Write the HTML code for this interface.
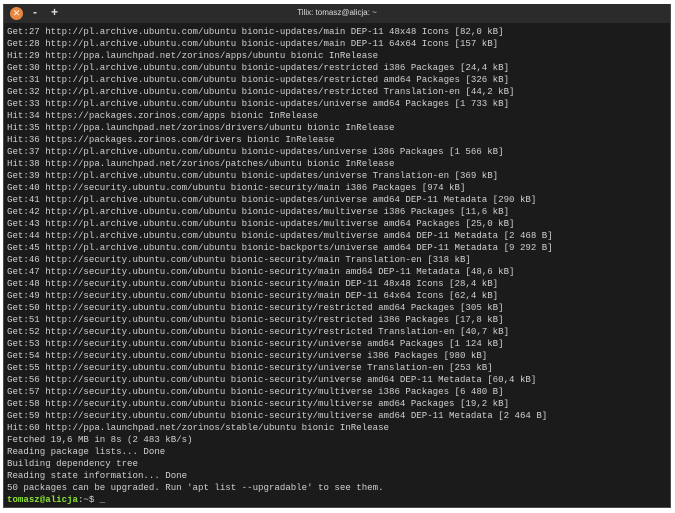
<!DOCTYPE html><html><head><style>
body{margin:0;width:675px;height:513px;background:#fff;overflow:hidden;position:relative;font-family:"Liberation Sans",sans-serif}
.win{position:absolute;left:3px;top:4px;width:666px;height:503px;background:#1b1b1b;border:1px solid #4a4a4a;border-top:none}
.tb{height:19px;background:#2b2b2b;position:relative}
.x{position:absolute;left:6px;top:3px;width:13px;height:13px;border-radius:50%;background:#e9863f;color:#fff;font-size:9px;line-height:13px;text-align:center}
.b{position:absolute;top:1px;color:#ddd;font-size:12px;font-weight:bold}
.t{position:absolute;left:0;right:0;top:4px;text-align:center;color:#ddd;font-size:8px}
pre{margin:0;position:absolute;left:3px;top:22px;color:#cfcfcf;font-family:"Liberation Mono",monospace;font-size:9.1px;line-height:12px}
.g{color:#8ae234;font-weight:bold}
</style></head><body><div class="win"><div class="tb"><div class="x">✕</div><div class="b" style="left:29px">-</div><div class="b" style="left:47px">+</div><div class="t">Tilix: tomasz@alicja: ~</div></div>
<pre>Get:27 http://pl.archive.ubuntu.com/ubuntu bionic-updates/main DEP-11 48x48 Icons [82,0 kB]
Get:28 http://pl.archive.ubuntu.com/ubuntu bionic-updates/main DEP-11 64x64 Icons [157 kB]
Hit:29 http://ppa.launchpad.net/zorinos/apps/ubuntu bionic InRelease
Get:30 http://pl.archive.ubuntu.com/ubuntu bionic-updates/restricted i386 Packages [24,4 kB]
Get:31 http://pl.archive.ubuntu.com/ubuntu bionic-updates/restricted amd64 Packages [326 kB]
Get:32 http://pl.archive.ubuntu.com/ubuntu bionic-updates/restricted Translation-en [44,2 kB]
Get:33 http://pl.archive.ubuntu.com/ubuntu bionic-updates/universe amd64 Packages [1 733 kB]
Hit:34 https://packages.zorinos.com/apps bionic InRelease
Hit:35 http://ppa.launchpad.net/zorinos/drivers/ubuntu bionic InRelease
Hit:36 https://packages.zorinos.com/drivers bionic InRelease
Get:37 http://pl.archive.ubuntu.com/ubuntu bionic-updates/universe i386 Packages [1 566 kB]
Hit:38 http://ppa.launchpad.net/zorinos/patches/ubuntu bionic InRelease
Get:39 http://pl.archive.ubuntu.com/ubuntu bionic-updates/universe Translation-en [369 kB]
Get:40 http://security.ubuntu.com/ubuntu bionic-security/main i386 Packages [974 kB]
Get:41 http://pl.archive.ubuntu.com/ubuntu bionic-updates/universe amd64 DEP-11 Metadata [290 kB]
Get:42 http://pl.archive.ubuntu.com/ubuntu bionic-updates/multiverse i386 Packages [11,6 kB]
Get:43 http://pl.archive.ubuntu.com/ubuntu bionic-updates/multiverse amd64 Packages [25,0 kB]
Get:44 http://pl.archive.ubuntu.com/ubuntu bionic-updates/multiverse amd64 DEP-11 Metadata [2 468 B]
Get:45 http://pl.archive.ubuntu.com/ubuntu bionic-backports/universe amd64 DEP-11 Metadata [9 292 B]
Get:46 http://security.ubuntu.com/ubuntu bionic-security/main Translation-en [318 kB]
Get:47 http://security.ubuntu.com/ubuntu bionic-security/main amd64 DEP-11 Metadata [48,6 kB]
Get:48 http://security.ubuntu.com/ubuntu bionic-security/main DEP-11 48x48 Icons [28,4 kB]
Get:49 http://security.ubuntu.com/ubuntu bionic-security/main DEP-11 64x64 Icons [62,4 kB]
Get:50 http://security.ubuntu.com/ubuntu bionic-security/restricted amd64 Packages [305 kB]
Get:51 http://security.ubuntu.com/ubuntu bionic-security/restricted i386 Packages [17,8 kB]
Get:52 http://security.ubuntu.com/ubuntu bionic-security/restricted Translation-en [40,7 kB]
Get:53 http://security.ubuntu.com/ubuntu bionic-security/universe amd64 Packages [1 124 kB]
Get:54 http://security.ubuntu.com/ubuntu bionic-security/universe i386 Packages [980 kB]
Get:55 http://security.ubuntu.com/ubuntu bionic-security/universe Translation-en [253 kB]
Get:56 http://security.ubuntu.com/ubuntu bionic-security/universe amd64 DEP-11 Metadata [60,4 kB]
Get:57 http://security.ubuntu.com/ubuntu bionic-security/multiverse i386 Packages [6 480 B]
Get:58 http://security.ubuntu.com/ubuntu bionic-security/multiverse amd64 Packages [19,2 kB]
Get:59 http://security.ubuntu.com/ubuntu bionic-security/multiverse amd64 DEP-11 Metadata [2 464 B]
Hit:60 http://ppa.launchpad.net/zorinos/stable/ubuntu bionic InRelease
Fetched 19,6 MB in 8s (2 483 kB/s)
Reading package lists... Done
Building dependency tree
Reading state information... Done
50 packages can be upgraded. Run 'apt list --upgradable' to see them.
<span class="g">tomasz@alicja</span>:~$ _</pre></div></body></html>
